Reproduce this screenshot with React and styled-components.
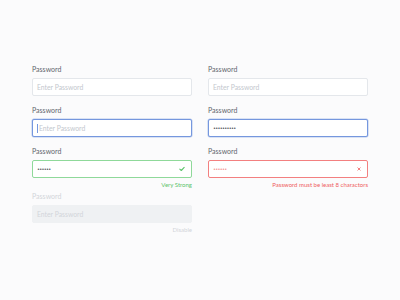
import styled, { createGlobalStyle, css } from 'styled-components';

const GlobalStyle = createGlobalStyle`
  html, body {
    margin: 0;
    padding: 0;
    background: #fbfbfc;
    font-family: Lato, "Open Sans", sans-serif;
  }
`;

const colors = {
  label: '#62666d',
  placeholder: '#c3c7cd',
  border: '#e4e7eb',
  focus: '#7597de',
  success: '#8fd99a',
  successText: '#5cc46c',
  error: '#f38080',
  errorText: '#ef5e5e',
  disabledBg: '#eff1f3',
  disabledText: '#d2d5da',
};

const Page = styled.div`
  width: 400px;
  height: 300px;
  box-sizing: border-box;
  padding: 64px 32px 0;
  display: grid;
  grid-template-columns: 160px 160px;
  column-gap: 16px;
  align-items: start;
`;

const Column = styled.div`
  display: flex;
  flex-direction: column;
  gap: 9px;
`;

const Field = styled.div`
  display: flex;
  flex-direction: column;
`;

const Label = styled.div`
  font-size: 7px;
  line-height: 10px;
  height: 10px;
  margin-bottom: 4px;
  color: ${(p) => (p.$disabled ? colors.disabledText : colors.label)};
`;

const borderFor = {
  default: colors.border,
  focus: colors.focus,
  success: colors.success,
  error: colors.error,
  disabled: colors.disabledBg,
};

const Box = styled.div`
  position: relative;
  height: 18px;
  box-sizing: border-box;
  border: 1px solid ${(p) => borderFor[p.$state]};
  border-radius: 2px;
  background: ${(p) => (p.$state === 'disabled' ? colors.disabledBg : '#fff')};
  display: flex;
  align-items: center;
  padding: 0 4px;
  ${(p) => p.$state === 'focus' && css`
    box-shadow: 0 0 0 0.5px rgba(117, 151, 222, 0.5);
  `}
`;

const Placeholder = styled.span`
  font-size: 6.8px;
  color: ${(p) => (p.$disabled ? colors.disabledText : colors.placeholder)};
`;

const Caret = styled.span`
  width: 1px;
  height: 9px;
  background: ${colors.focus};
  margin-right: 1px;
`;

const Dots = styled.span`
  font-family: "DejaVu Sans", sans-serif;
  font-size: 5px;
  letter-spacing: -0.7px;
  line-height: 1;
  color: ${(p) => p.$color || '#2f343b'};
`;

const StatusIcon = styled.span`
  position: absolute;
  right: 6px;
  top: 50%;
  transform: translateY(-50%);
  display: flex;
`;

const Helper = styled.div`
  font-size: 6px;
  line-height: 9px;
  margin: 2px 0 -7px;
  text-align: right;
  color: ${(p) => p.$color};
`;

function Check() {
  return (
    <svg width="6" height="5" viewBox="0 0 6 5">
      <path d="M0.8 2.6 L2.3 4 L5.2 0.9" fill="none" stroke={colors.successText} strokeWidth="1.1" strokeLinecap="round" strokeLinejoin="round" />
    </svg>
  );
}

function Cross() {
  return (
    <svg width="4" height="4" viewBox="0 0 4 4">
      <path d="M0.8 0.8 L3.2 3.2 M3.2 0.8 L0.8 3.2" fill="none" stroke={colors.error} strokeWidth="1" strokeLinecap="round" />
    </svg>
  );
}

export default function App() {
  return (
    <>
      <GlobalStyle />
      <Page>
        <Column>
          <Field>
            <Label>Password</Label>
            <Box $state="default">
              <Placeholder>Enter Password</Placeholder>
            </Box>
          </Field>
          <Field>
            <Label>Password</Label>
            <Box $state="focus">
              <Caret />
              <Placeholder>Enter Password</Placeholder>
            </Box>
          </Field>
          <Field>
            <Label>Password</Label>
            <Box $state="success">
              <Dots>••••••</Dots>
              <StatusIcon><Check /></StatusIcon>
            </Box>
            <Helper $color={colors.successText}>Very Strong</Helper>
          </Field>
          <Field>
            <Label $disabled>Password</Label>
            <Box $state="disabled">
              <Placeholder $disabled>Enter Password</Placeholder>
            </Box>
            <Helper $color={colors.disabledText}>Disable</Helper>
          </Field>
        </Column>
        <Column>
          <Field>
            <Label>Password</Label>
            <Box $state="default">
              <Placeholder>Enter Password</Placeholder>
            </Box>
          </Field>
          <Field>
            <Label>Password</Label>
            <Box $state="focus">
              <Dots>••••••••••</Dots>
            </Box>
          </Field>
          <Field>
            <Label>Password</Label>
            <Box $state="error">
              <Dots $color={colors.error}>••••••</Dots>
              <StatusIcon><Cross /></StatusIcon>
            </Box>
            <Helper $color={colors.errorText}>Password must be least 8 charactors</Helper>
          </Field>
        </Column>
      </Page>
    </>
  );
}
